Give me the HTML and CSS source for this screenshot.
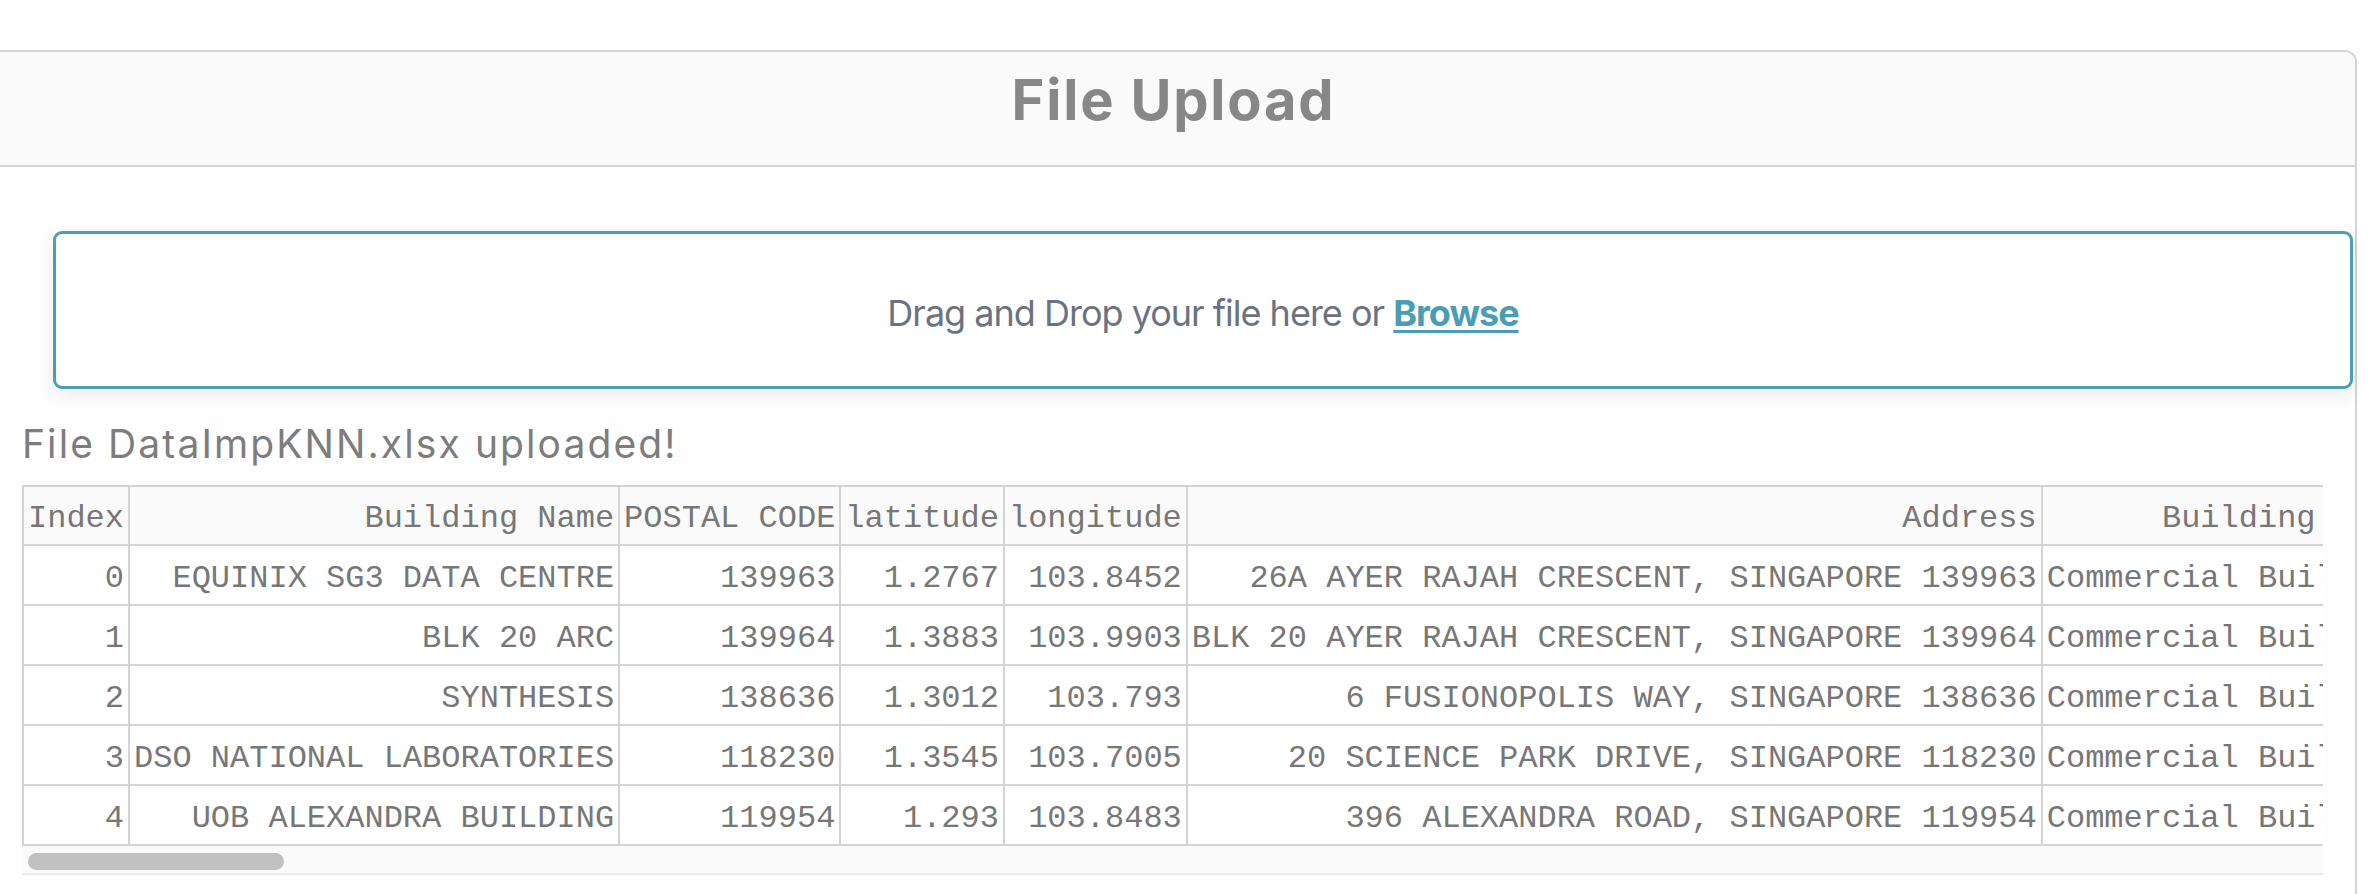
FILE: index.html
```html
<!DOCTYPE html>
<html lang="en">
<head>
<meta charset="utf-8">
<title>File Upload</title>
<link rel="stylesheet" href="styles.css">
</head>
<body>
<div class="page">
  <section class="card">
    <header class="card-header">
      <h1 class="card-title">File Upload</h1>
    </header>
    <div class="card-body">
      <div class="dropzone">
        <p class="dropzone-text">Drag and Drop your file here or <a class="browse" href="#">Browse</a></p>
      </div>
      <div class="result">
        <h2 class="result-title">File DataImpKNN.xlsx uploaded!</h2>
        <div class="table-scroll">
          <table class="data-table">
            <thead>
              <tr><th>Index</th><th>Building Name</th><th>POSTAL CODE</th><th>latitude</th><th>longitude</th><th>Address</th><th>Building Type</th></tr>
            </thead>
            <tbody>
              <tr><td>0</td><td>EQUINIX SG3 DATA CENTRE</td><td>139963</td><td>1.2767</td><td>103.8452</td><td>26A AYER RAJAH CRESCENT, SINGAPORE 139963</td><td>Commercial Building</td></tr>
              <tr><td>1</td><td>BLK 20 ARC</td><td>139964</td><td>1.3883</td><td>103.9903</td><td>BLK 20 AYER RAJAH CRESCENT, SINGAPORE 139964</td><td>Commercial Building</td></tr>
              <tr><td>2</td><td>SYNTHESIS</td><td>138636</td><td>1.3012</td><td>103.793</td><td>6 FUSIONOPOLIS WAY, SINGAPORE 138636</td><td>Commercial Building</td></tr>
              <tr><td>3</td><td>DSO NATIONAL LABORATORIES</td><td>118230</td><td>1.3545</td><td>103.7005</td><td>20 SCIENCE PARK DRIVE, SINGAPORE 118230</td><td>Commercial Building</td></tr>
              <tr><td>4</td><td>UOB ALEXANDRA BUILDING</td><td>119954</td><td>1.293</td><td>103.8483</td><td>396 ALEXANDRA ROAD, SINGAPORE 119954</td><td>Commercial Building</td></tr>
            </tbody>
          </table>
        </div>
        <div class="hscroll"><div class="hscroll-thumb"></div></div>
      </div>
    </div>
  </section>
</div>
</body>
</html>
```

FILE: styles.css
```css
html, body {
  margin: 0;
  overflow: hidden;
  background: #ffffff;
}

.page {
  padding-top: 50px;
}

.card {
  margin-left: -10px;
  width: 2367px;
  box-sizing: border-box;
  border: 2px solid #d3d3d3;
  border-radius: 12px;
  background: #fefefe;
  padding-bottom: 80px;
}

.card-header {
  height: 113px;
  background: #fafafa;
  border-bottom: 2px solid #d3d3d3;
  border-radius: 10px 10px 0 0;
  text-align: center;
}

.card-title {
  margin: 0;
  padding-top: 20px;
  font-family: Inter, "Open Sans", sans-serif;
  font-weight: 700;
  font-size: 56px;
  line-height: 56px;
  letter-spacing: 1.8px;
  color: #878787;
}

.dropzone {
  margin: 64px 2px 0 61px;
  height: 158px;
  box-sizing: border-box;
  border: 3px solid #4b9fb5;
  border-radius: 9px;
  background: #ffffff;
  box-shadow: 0 6px 18px rgba(0, 0, 0, 0.08);
  display: flex;
  align-items: center;
  justify-content: center;
}

.dropzone-text {
  margin: 0;
  padding-top: 6px;
  font-family: Inter, Roboto, sans-serif;
  font-size: 36px;
  letter-spacing: -1px;
  color: #6b7280;
}

.browse {
  color: #4a9db5;
  font-weight: 700;
  text-decoration: underline;
  text-decoration-thickness: 3px;
  text-underline-offset: 4px;
}

.result {
  margin: 0 32px 0 30px;
}

.result-title {
  margin: 32px 0 18px;
  font-family: Inter, "Open Sans", sans-serif;
  font-weight: 400;
  font-size: 39px;
  line-height: 46px;
  letter-spacing: 2.1px;
  color: #7d7d7d;
}

.table-scroll {
  overflow: hidden;
}

.data-table {
  border-collapse: separate;
  border-spacing: 0;
  border-top: 2px solid #d4d4d4;
  border-left: 2px solid #d4d4d4;
  font-family: "Liberation Mono", "Courier New", monospace;
  font-size: 32px;
  line-height: 38px;
  color: #777777;
  white-space: nowrap;
}

.data-table th,
.data-table td {
  border-right: 2px solid #d4d4d4;
  border-bottom: 2px solid #d4d4d4;
  padding: 14px 4px 6px;
  text-align: right;
  font-weight: 400;
}

.data-table th {
  padding-top: 13px;
  background: #fafafa;
}

.data-table td {
  background: #ffffff;
}

.hscroll {
  height: 20px;
  padding: 7px 0 0 6px;
  background: #fafafa;
  border-bottom: 2px solid #ececec;
}

.hscroll-thumb {
  width: 256px;
  height: 17px;
  border-radius: 9px;
  background: #c1c1c1;
}
```
